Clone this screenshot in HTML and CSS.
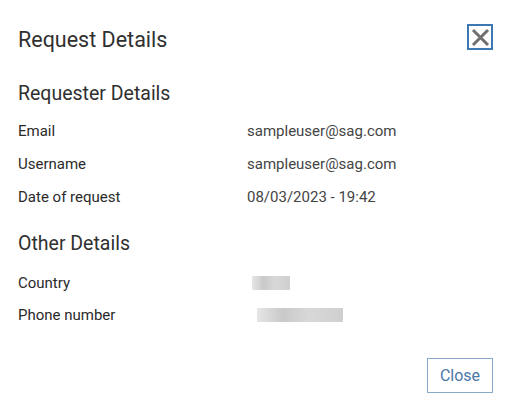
FILE: index.html
```html
<!DOCTYPE html>
<html>
<head>
<meta charset="utf-8">
<link rel="stylesheet" href="styles.css">
</head>
<body>
<div class="dialog">
  <div class="header">
    <h1 class="title">Request Details</h1>
    <button class="icon-close" aria-label="Close">
      <svg width="19" height="19" viewBox="0 0 19 19"><path d="M2 2L17 17M17 2L2 17" stroke="#6f6f6f" stroke-width="3" fill="none"/></svg>
    </button>
  </div>
  <h2 class="section">Requester Details</h2>
  <div class="rows">
    <div class="row"><span class="label">Email</span><span class="value">sampleuser@sag.com</span></div>
    <div class="row"><span class="label">Username</span><span class="value">sampleuser@sag.com</span></div>
    <div class="row"><span class="label">Date of request</span><span class="value">08/03/2023 - 19:42</span></div>
  </div>
  <h2 class="section section-other">Other Details</h2>
  <div class="rows rows-other">
    <div class="row row-short"><span class="label">Country</span><span class="value"><span class="blur blur-country"></span></span></div>
    <div class="row row-short"><span class="label">Phone number</span><span class="value"><span class="blur blur-phone"></span></span></div>
  </div>
  <div class="footer">
    <button class="btn-close">Close</button>
  </div>
</div>
</body>
</html>
```
FILE: styles.css
```css
html, body {
  margin: 0;
  padding: 0;
  background: #ffffff;
}
body {
  font-family: Roboto, "Liberation Sans", sans-serif;
  color: #333333;
}
.dialog {
  width: 514px;
  height: 408px;
  box-sizing: border-box;
  padding: 24px 21px 0 18px;
}
.header {
  display: flex;
  justify-content: space-between;
  align-items: flex-start;
  height: 56px;
}
.title {
  margin: 2px 0 0 0;
  font-size: 21.5px;
  font-weight: 400;
  line-height: 28px;
  color: #303030;
}
.icon-close {
  width: 26px;
  height: 26px;
  margin: 0;
  padding: 0;
  border: 2px solid #3c78b4;
  background: #fff;
  display: flex;
  align-items: center;
  justify-content: center;
  box-sizing: border-box;
}
.section {
  margin: 0;
  font-size: 19.5px;
  font-weight: 400;
  line-height: 28px;
  color: #303030;
}
.section-other {
  margin-top: 17px;
}
.rows {
  display: flex;
  flex-direction: column;
  margin-top: 6px;
}
.rows-other {
  margin-top: 9px;
}
.row {
  display: flex;
  height: 33px;
  align-items: center;
  font-size: 15px;
}
.row-short {
  height: 32px;
}
.label {
  width: 229px;
  color: #2a2a2a;
}
.value {
  color: #444;
}
.blur {
  display: block;
  background: linear-gradient(90deg, #e6e6e6, #c9c9c9 30%, #d8d8d8 60%, #cfcfcf);
  border-radius: 1px;
}
.blur-country {
  width: 38px;
  height: 14px;
  margin-left: 5px;
}
.blur-phone {
  width: 86px;
  height: 14px;
  margin-left: 10px;
}
.footer {
  display: flex;
  justify-content: flex-end;
  margin-top: 27px;
}
.btn-close {
  width: 66px;
  height: 35px;
  border: 1px solid #8aa8c8;
  background: #fff;
  color: #4a78a8;
  font-family: Roboto, "Liberation Sans", sans-serif;
  font-size: 16px;
  padding: 0;
}
```
